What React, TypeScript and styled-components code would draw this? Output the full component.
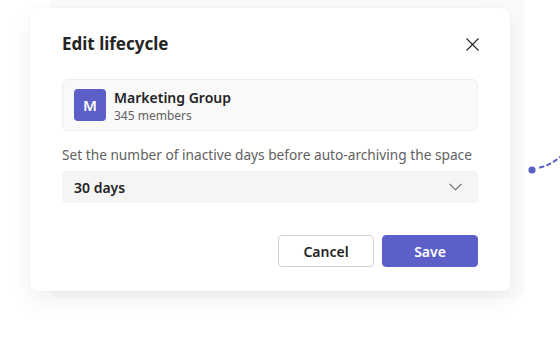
import * as React from 'react';
import styled, { createGlobalStyle } from 'styled-components';

const GlobalStyle = createGlobalStyle`
  html, body {
    margin: 0;
    padding: 0;
    background: #ffffff;
  }
  body {
    font-family: 'Noto Sans', 'Open Sans', sans-serif;
    color: #242424;
  }
`;

const Page = styled.div`
  position: relative;
  width: 560px;
  height: 340px;
  overflow: hidden;
  box-sizing: border-box;
  padding: 8px 0 0 30px;
  background: #ffffff;
`;

// faint card peeking out behind the dialog
const BackStrip = styled.div`
  position: absolute;
  top: -20px;
  left: 50px;
  width: 474px;
  height: 318px;
  background: #fafafa;
  border-radius: 10px;
`;

const Dialog = styled.div`
  position: relative;
  width: 480px;
  box-sizing: border-box;
  padding: 26px 32px 24px 32px;
  background: #ffffff;
  border-radius: 8px;
  box-shadow: 0 10px 24px rgba(0, 0, 0, 0.06), 0 0 3px rgba(0, 0, 0, 0.05);
  display: flex;
  flex-direction: column;
`;

const Header = styled.div`
  display: flex;
  align-items: center;
  justify-content: space-between;
  height: 20px;
  margin-bottom: 25px;
`;

const Title = styled.h2`
  margin: 0;
  font-size: 17px;
  font-weight: 700;
  line-height: 20px;
  color: #242424;
`;

const CloseButton = styled.button`
  border: none;
  background: transparent;
  padding: 0;
  width: 16px;
  height: 16px;
  margin-right: -2px;
  display: flex;
  align-items: center;
  justify-content: center;
  cursor: pointer;
`;

const GroupCard = styled.div`
  display: flex;
  align-items: center;
  gap: 8px;
  height: 52px;
  box-sizing: border-box;
  padding: 0 11px;
  background: #f9f9fa;
  border: 1px solid #eeeeee;
  border-radius: 6px;
  margin-bottom: 14px;
`;

const Avatar = styled.div`
  width: 32px;
  height: 32px;
  border-radius: 4px;
  background: #5b5fc7;
  color: #ffffff;
  font-size: 15px;
  font-weight: 600;
  display: flex;
  align-items: center;
  justify-content: center;
`;

const GroupText = styled.div`
  display: flex;
  flex-direction: column;
  padding-top: 1px;
`;

const GroupName = styled.div`
  font-size: 14px;
  font-weight: 600;
  line-height: 19px;
  color: #242424;
`;

const GroupMeta = styled.div`
  font-size: 12px;
  line-height: 17px;
  color: #616161;
`;

const Label = styled.div`
  font-size: 13.7px;
  line-height: 20px;
  color: #616161;
  margin-bottom: 6px;
`;

const Select = styled.div`
  display: flex;
  align-items: center;
  justify-content: space-between;
  height: 32px;
  box-sizing: border-box;
  padding: 0 16px 0 12px;
  background: #f5f5f5;
  border-radius: 4px;
  font-size: 14px;
  font-weight: 600;
  color: #242424;
  margin-bottom: 32px;
`;

const Footer = styled.div`
  display: flex;
  justify-content: flex-end;
  gap: 8px;
`;

const Button = styled.button<{ $primary?: boolean }>`
  width: 96px;
  height: 32px;
  box-sizing: border-box;
  border-radius: 4px;
  font-family: inherit;
  font-size: 14px;
  font-weight: 600;
  cursor: pointer;
  border: 1px solid ${({ $primary }) => ($primary ? '#5b5fc7' : '#d1d1d1')};
  background: ${({ $primary }) => ($primary ? '#5b5fc7' : '#ffffff')};
  color: ${({ $primary }) => ($primary ? '#ffffff' : '#242424')};
`;

const Connector = styled.svg`
  position: absolute;
  right: 0;
  top: 150px;
`;

const App: React.FC = () => {
  return (
    <>
      <GlobalStyle />
      <Page>
        <BackStrip />
        <Dialog>
          <Header>
            <Title>Edit lifecycle</Title>
            <CloseButton aria-label="Close">
              <svg width="13" height="13" viewBox="0 0 13 13">
                <path d="M0.5 0.5 L12.5 12.5 M12.5 0.5 L0.5 12.5" stroke="#242424" strokeWidth="1.1" />
              </svg>
            </CloseButton>
          </Header>
          <GroupCard>
            <Avatar>M</Avatar>
            <GroupText>
              <GroupName>Marketing Group</GroupName>
              <GroupMeta>345 members</GroupMeta>
            </GroupText>
          </GroupCard>
          <Label>Set the number of inactive days before auto-archiving the space</Label>
          <Select>
            <span>30 days</span>
            <svg width="13" height="8" viewBox="0 0 13 8">
              <path d="M0.5 0.8 L6.5 6.8 L12.5 0.8" fill="none" stroke="#616161" strokeWidth="1.1" />
            </svg>
          </Select>
          <Footer>
            <Button>Cancel</Button>
            <Button $primary>Save</Button>
          </Footer>
        </Dialog>
        <Connector width="32" height="26" viewBox="0 0 32 26">
          <circle cx="4" cy="20" r="3.6" fill="#5b5fc7" />
          <path d="M12 17.5 C20 15.5 26 12 32 7" fill="none" stroke="#5b5fc7" strokeWidth="2" strokeDasharray="3.5 4" strokeLinecap="round" />
        </Connector>
      </Page>
    </>
  );
};

export default App;
